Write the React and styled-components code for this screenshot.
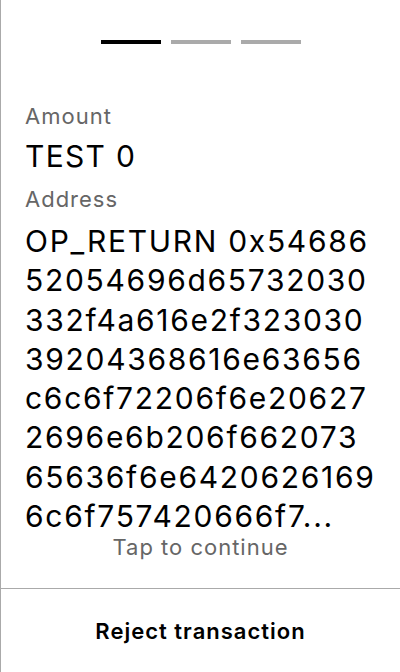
import styled, { createGlobalStyle } from "styled-components"

const Global = createGlobalStyle`
html,body{margin:0;padding:0;background:#fff;}
body{font-family:Inter,"Noto Sans",sans-serif;}
*{box-sizing:border-box;}
`

const hex = "5468652054696d65732030332f4a616e2f32303039204368616e63656c6c6f72206f6e206272696e6b206f66207365636f6e64206261696c6f757420666f722062616e6b73"
const MAX = 125
const shown = hex.length > MAX ? hex.slice(0, MAX) + '...' : hex

export default function App() {
  const steps = [true, false, false]
  return (
    <>
      <Global />
      <Screen>
        <Main>
          <Steps>
            {steps.map((on, i) => <Step key={i} on={on ? 1 : 0} />)}
          </Steps>
          <Fields>
            <Label>Amount</Label>
            <Value>TEST 0</Value>
            <Label>Address</Label>
            <Address>OP_RETURN 0x{shown}</Address>
          </Fields>
          <Hint>Tap to continue</Hint>
        </Main>
        <Footer>
          <Reject>Reject transaction</Reject>
        </Footer>
      </Screen>
    </>
  )
}

const Screen = styled.div`
width:400px;height:672px;
border-left:1px solid #aaa;
display:flex;flex-direction:column;
`
const Main = styled.div`
flex:1;
display:flex;flex-direction:column;
padding-top:40px;
`
const Steps = styled.div`
display:flex;justify-content:center;gap:10px;
`
const Step = styled.div`
width:60px;height:4px;
background:${p => p.on ? '#000' : '#aaa'};
`
const Fields = styled.div`
padding:58px 23px 0 24px;
display:flex;flex-direction:column;
`
const Label = styled.div`
font-size:22px;line-height:28px;color:#666;letter-spacing:1px;
`
const Value = styled.div`
font-size:30px;line-height:40px;color:#000;letter-spacing:1.3px;
margin:6px 0 9px;
`
const Address = styled.div`
font-size:30px;line-height:39.3px;color:#000;letter-spacing:1.7px;
margin-top:9px;
word-break:break-all;
display:-webkit-box;-webkit-box-orient:vertical;-webkit-line-clamp:8;
overflow:hidden;
`
const Hint = styled.div`
margin-top:-3px;
text-align:center;font-size:22px;line-height:28px;color:#666;letter-spacing:1px;
`
const Footer = styled.div`
height:84px;flex:none;border-top:1px solid #aaa;
display:flex;align-items:center;justify-content:center;
`
const Reject = styled.div`
font-size:22px;font-weight:600;color:#000;letter-spacing:1px;
`
